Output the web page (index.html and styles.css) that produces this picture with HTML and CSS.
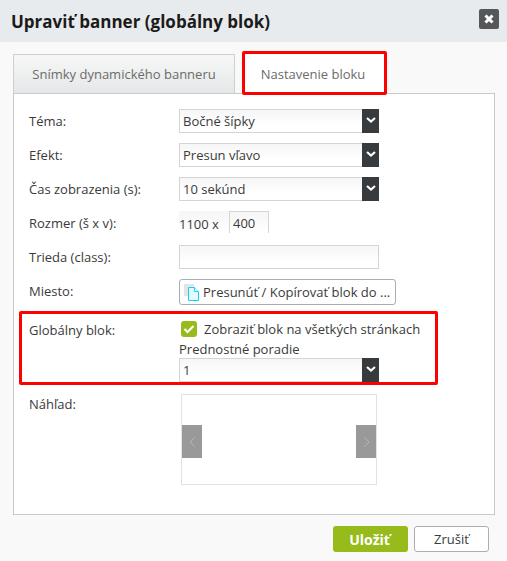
FILE: index.html
```html
<!DOCTYPE html>
<html lang="sk">
<head>
    <meta charset="UTF-8">
    <meta name="viewport" content="width=device-width, initial-scale=1.0">
    <title>Upraviť banner</title>
    <link rel="stylesheet" href="styles.css">
</head>
<body>
    <div class="dialog">
        <header class="dialog-header">
            <h1>Upraviť banner (globálny blok)</h1>
            <button class="close-btn" type="button" aria-label="Zavrieť">
                <svg width="10" height="10" viewBox="0 0 10 10"><path d="M1.500 1.500l7 7M8.500 1.500l-7 7" stroke="#fff" stroke-width="3" fill="none"/></svg>
            </button>
        </header>

        <div class="tabs">
            <div class="tab">Snímky dynamického banneru</div>
            <div class="tab tab-active">Nastavenie bloku<span class="mark mark-tab"></span></div>
        </div>

        <form class="panel">
            <div class="row">
                <label>Téma:</label>
                <div class="select">
                    <select><option>Bočné šípky</option></select>
                    <span class="select-arrow"><svg width="10" height="6" viewBox="0 0 10 6"><path d="M1 1l4 3.500L9 1" stroke="#fff" stroke-width="2.200" fill="none"/></svg></span>
                </div>
            </div>
            <div class="row">
                <label>Efekt:</label>
                <div class="select">
                    <select><option>Presun vľavo</option></select>
                    <span class="select-arrow"><svg width="10" height="6" viewBox="0 0 10 6"><path d="M1 1l4 3.500L9 1" stroke="#fff" stroke-width="2.200" fill="none"/></svg></span>
                </div>
            </div>
            <div class="row">
                <label>Čas zobrazenia (s):</label>
                <div class="select">
                    <select><option>10 sekúnd</option></select>
                    <span class="select-arrow"><svg width="10" height="6" viewBox="0 0 10 6"><path d="M1 1l4 3.500L9 1" stroke="#fff" stroke-width="2.200" fill="none"/></svg></span>
                </div>
            </div>
            <div class="row">
                <label>Rozmer (š x v):</label>
                <div class="size">
                    <span class="size-width">1100 x</span>
                    <input class="size-height" type="text" value="400">
                </div>
            </div>
            <div class="row">
                <label>Trieda (class):</label>
                <input class="text-input" type="text">
            </div>
            <div class="row row-place">
                <label>Miesto:</label>
                <button class="move-btn" type="button">
                    <svg width="16" height="18" viewBox="0 0 16 18"><rect x="0" y="1" width="10" height="12" fill="#e4e4e4"/><path d="M4.500 4.500h6l4 4v9h-10z" fill="#e0fbff" stroke="#14d0f8" stroke-width="1"/><path d="M10.500 4.500v4h4" fill="#fff" stroke="#14d0f8" stroke-width="1"/></svg>
                    Presunúť / Kopírovať blok do ...
                </button>
            </div>
            <div class="row row-global">
                <label>Globálny blok:</label>
                <div class="global-fields">
                    <div class="check-line">
                        <span class="check"><svg width="12" height="10" viewBox="0 0 12 10"><path d="M1.500 5l3 3 6-6" stroke="#fff" stroke-width="2.200" fill="none"/></svg></span>
                        Zobraziť blok na všetkých stránkach
                    </div>
                    <div class="order-label">Prednostné poradie</div>
                    <div class="select">
                        <select><option>1</option></select>
                        <span class="select-arrow"><svg width="10" height="6" viewBox="0 0 10 6"><path d="M1 1l4 3.500L9 1" stroke="#fff" stroke-width="2.200" fill="none"/></svg></span>
                    </div>
                </div>
                <span class="mark mark-global"></span>
            </div>
            <div class="row row-preview">
                <label>Náhľad:</label>
                <div class="preview">
                    <span class="preview-arrow"><svg width="7" height="12" viewBox="0 0 7 12"><path d="M6 1L1 6l5 5" stroke="#b5b5b5" fill="none"/></svg></span>
                    <span class="preview-arrow"><svg width="7" height="12" viewBox="0 0 7 12"><path d="M1 1l5 5-5 5" stroke="#b5b5b5" fill="none"/></svg></span>
                </div>
            </div>
        </form>

        <footer class="dialog-footer">
            <button class="btn btn-save" type="button">Uložiť</button>
            <button class="btn btn-cancel" type="button">Zrušiť</button>
        </footer>
    </div>
</body>
</html>
```

FILE: styles.css
```css
* {
    box-sizing: border-box;
}
html, body {
    margin: 0;
    padding: 0;
}
body {
    font-family: "Open Sans", Arial, sans-serif;
    font-size: 13px;
    color: #3a3a3a;
    background: #f9f9f9;
}
.dialog {
    width: 507px;
    height: 561px;
    overflow: hidden;
}
.dialog-header {
    height: 42px;
    background: #e8ebee;
    display: flex;
    align-items: center;
    justify-content: space-between;
    padding: 0 8px 0 11px;
}
h1 {
    margin: 0;
    font-size: 17px;
    font-weight: 700;
    color: #1b1b1b;
}
.close-btn {
    width: 20px;
    height: 20px;
    padding: 0;
    border: none;
    border-radius: 2px;
    background: #55585b;
    display: flex;
    align-items: center;
    justify-content: center;
    margin-top: -4px;
}
.tabs {
    display: flex;
    gap: 7px;
    margin: 12px 0 0 13px;
    height: 39px;
}
.tab {
    position: relative;
    width: 222px;
    height: 39px;
    border: 1px solid #cfcfcf;
    border-bottom: none;
    background: linear-gradient(#f7f7f7, #e4e7e8);
    color: #6b6b6b;
    display: flex;
    align-items: center;
    justify-content: center;
}
.tab-active {
    width: 144px;
    height: 40px;
    padding-right: 2px;
    background: #fff;
    border: none;
    z-index: 1;
}
.mark {
    position: absolute;
    border: 3px solid #f00;
    border-radius: 2px;
    pointer-events: none;
}
.mark-tab {
    left: 0;
    top: -3px;
    width: 145px;
    height: 44px;
}
.panel {
    width: 482px;
    height: 422px;
    margin-left: 13px;
    border: 1px solid #c9c9c9;
    background: #fff;
    padding: 15px 0 0 15px;
}
.row {
    position: relative;
    display: grid;
    grid-template-columns: 150px 1fr;
    min-height: 24px;
    margin-bottom: 10px;
}
.row label {
    line-height: 24px;
}
.select {
    display: flex;
    width: 200px;
    height: 24px;
}
.select select {
    appearance: none;
    flex: 1;
    min-width: 0;
    height: 24px;
    border: 1px solid #d5d5d5;
    border-right: none;
    border-radius: 0;
    padding: 0 3px;
    font: inherit;
    color: #3a3a3a;
    background: linear-gradient(#f6f6f6, #fff 70%);
}
.select-arrow {
    width: 17px;
    background: #383b3d;
    display: flex;
    align-items: center;
    justify-content: center;
    padding-bottom: 2px;
}
.size {
    display: flex;
    height: 22px;
    background: #f8f8f8;
    width: 90px;
}
.size-width {
    width: 50px;
    line-height: 26px;
    background: linear-gradient(#f6f6f6, #fff);
}
.size-height {
    width: 40px;
    height: 22px;
    border: 1px solid #d5d5d5;
    border-bottom: none;
    padding: 0 3px;
    font: inherit;
    color: #3a3a3a;
    background: linear-gradient(#f6f6f6, #fff);
    outline: none;
}
.text-input {
    width: 200px;
    height: 24px;
    border: 1px solid #d5d5d5;
    background: linear-gradient(#f6f6f6, #fff 70%);
}
.move-btn {
    width: 217px;
    height: 26px;
    padding: 0 0 0 4px;
    border: 1px solid #a8aeb8;
    border-radius: 3px;
    background: #fff;
    font: inherit;
    color: #3a3a3a;
    display: flex;
    align-items: center;
    gap: 3px;
    white-space: nowrap;
}
.row-place {
    margin-bottom: 0;
}
.row-global {
    margin-top: 16px;
    height: 61px;
    margin-bottom: 12px;
}
.row-global label {
    line-height: 18px;
}
.check-line {
    display: flex;
    align-items: center;
    gap: 7px;
    height: 16px;
    margin-left: 2px;
}
.check {
    width: 16px;
    height: 16px;
    border-radius: 3px;
    background: #96bb1b;
    display: flex;
    align-items: center;
    justify-content: center;
}
.order-label {
    line-height: 18px;
    margin-top: 3px;
}
.mark-global {
    left: -10px;
    top: -10px;
    width: 419px;
    height: 74px;
}
.preview {
    width: 196px;
    height: 91px;
    margin-left: 2px;
    padding-top: 4px;
    border: 1px solid #e2e2e2;
    background: #fff;
    display: flex;
    align-items: center;
    justify-content: space-between;
}
.preview-arrow {
    width: 20px;
    height: 33px;
    background: #999;
    display: flex;
    align-items: center;
    justify-content: center;
}
.row-preview label {
    line-height: 20px;
}
.dialog-footer {
    display: flex;
    justify-content: flex-end;
    gap: 6px;
    padding: 11px 18px 0 0;
}
.btn {
    width: 75px;
    height: 26px;
    padding: 0;
    border-radius: 3px;
    font-family: inherit;
    font-size: 14px;
}
.btn-save {
    border: none;
    background: #96bb1b;
    color: #fff;
    font-weight: 700;
    padding-right: 2px;
}
.btn-cancel {
    border: 1px solid #a8aeb8;
    background: #fff;
    color: #3a3a3a;
    font-size: 13px;
}
```
